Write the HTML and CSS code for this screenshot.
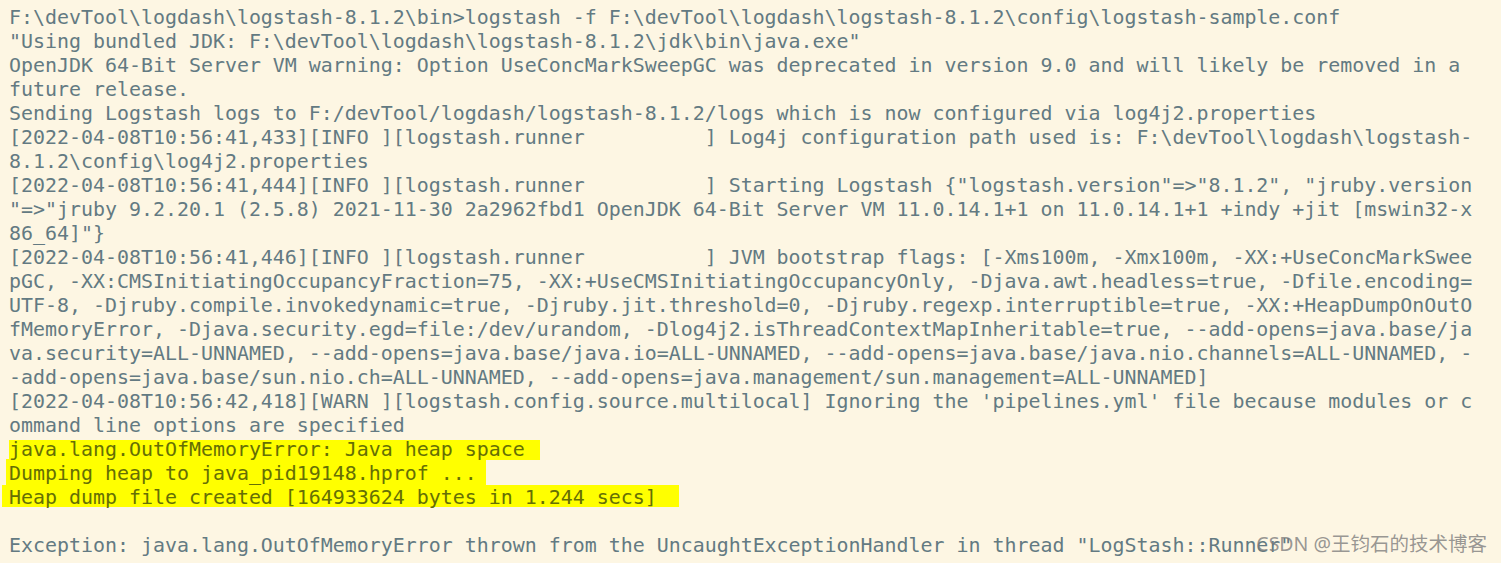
FILE: index.html
```html
<!DOCTYPE html>
<html>
<head>
<meta charset="utf-8">
<link rel="stylesheet" href="styles.css">
</head>
<body>
<div class="console">
<div class="line">F:\devTool\logdash\logstash-8.1.2\bin&gt;logstash -f F:\devTool\logdash\logstash-8.1.2\config\logstash-sample.conf</div>
<div class="line">"Using bundled JDK: F:\devTool\logdash\logstash-8.1.2\jdk\bin\java.exe"</div>
<div class="line">OpenJDK 64-Bit Server VM warning: Option UseConcMarkSweepGC was deprecated in version 9.0 and will likely be removed in a</div>
<div class="line">future release.</div>
<div class="line">Sending Logstash logs to F:/devTool/logdash/logstash-8.1.2/logs which is now configured via log4j2.properties</div>
<div class="line">[2022-04-08T10:56:41,433][INFO ][logstash.runner          ] Log4j configuration path used is: F:\devTool\logdash\logstash-</div>
<div class="line">8.1.2\config\log4j2.properties</div>
<div class="line">[2022-04-08T10:56:41,444][INFO ][logstash.runner          ] Starting Logstash {"logstash.version"=&gt;"8.1.2", "jruby.version</div>
<div class="line">"=&gt;"jruby 9.2.20.1 (2.5.8) 2021-11-30 2a2962fbd1 OpenJDK 64-Bit Server VM 11.0.14.1+1 on 11.0.14.1+1 +indy +jit [mswin32-x</div>
<div class="line">86_64]"}</div>
<div class="line">[2022-04-08T10:56:41,446][INFO ][logstash.runner          ] JVM bootstrap flags: [-Xms100m, -Xmx100m, -XX:+UseConcMarkSwee</div>
<div class="line">pGC, -XX:CMSInitiatingOccupancyFraction=75, -XX:+UseCMSInitiatingOccupancyOnly, -Djava.awt.headless=true, -Dfile.encoding=</div>
<div class="line">UTF-8, -Djruby.compile.invokedynamic=true, -Djruby.jit.threshold=0, -Djruby.regexp.interruptible=true, -XX:+HeapDumpOnOutO</div>
<div class="line">fMemoryError, -Djava.security.egd=file:/dev/urandom, -Dlog4j2.isThreadContextMapInheritable=true, --add-opens=java.base/ja</div>
<div class="line">va.security=ALL-UNNAMED, --add-opens=java.base/java.io=ALL-UNNAMED, --add-opens=java.base/java.nio.channels=ALL-UNNAMED, -</div>
<div class="line">-add-opens=java.base/sun.nio.ch=ALL-UNNAMED, --add-opens=java.management/sun.management=ALL-UNNAMED]</div>
<div class="line">[2022-04-08T10:56:42,418][WARN ][logstash.config.source.multilocal] Ignoring the 'pipelines.yml' file because modules or c</div>
<div class="line">ommand line options are specified</div>
<div class="line"><span class="hl hl-1">java.lang.OutOfMemoryError: Java heap space</span></div>
<div class="line"><span class="hl hl-2">Dumping heap to java_pid19148.hprof ...</span></div>
<div class="line"><span class="hl hl-3">Heap dump file created [164933624 bytes in 1.244 secs]</span></div>
<div class="line"> </div>
<div class="line">Exception: java.lang.OutOfMemoryError thrown from the UncaughtExceptionHandler in thread "LogStash::Runner"</div>
</div>
<div class="watermark">CSDN @王钧石的技术博客</div>
</body>
</html>
```
FILE: styles.css
```css
html, body {
  margin: 0;
  padding: 0;
  background: #fdf6e3;
  overflow: hidden;
}

body {
  position: relative;
  width: 1501px;
  height: 563px;
}

.console {
  position: relative;
  z-index: 0;
  padding: 6px 0 0 9px;
  font-family: "DejaVu Sans Mono", "Liberation Mono", monospace;
  font-size: 19.93px;
  line-height: 24px;
  color: #637a82;
}

.line {
  height: 24px;
  white-space: pre;
}

.hl {
  position: relative;
  color: #656f05;
}

.hl::before {
  content: "";
  position: absolute;
  z-index: -1;
  background: #ffff00;
}

.hl-1::before {
  left: 0;
  right: -15px;
  top: 2px;
  bottom: 1px;
}

.hl-2::before {
  left: -3px;
  right: -9px;
  top: -3px;
  bottom: 0;
}

.hl-3::before {
  left: -7px;
  right: -22px;
  top: -1px;
  bottom: 2px;
}

.watermark {
  position: absolute;
  right: 14px;
  top: 530px;
  font-family: "Noto Sans", "Noto Sans CJK SC", sans-serif;
  font-size: 19.5px;
  line-height: 28px;
  color: rgba(125, 125, 125, 0.8);
  white-space: nowrap;
}
```
